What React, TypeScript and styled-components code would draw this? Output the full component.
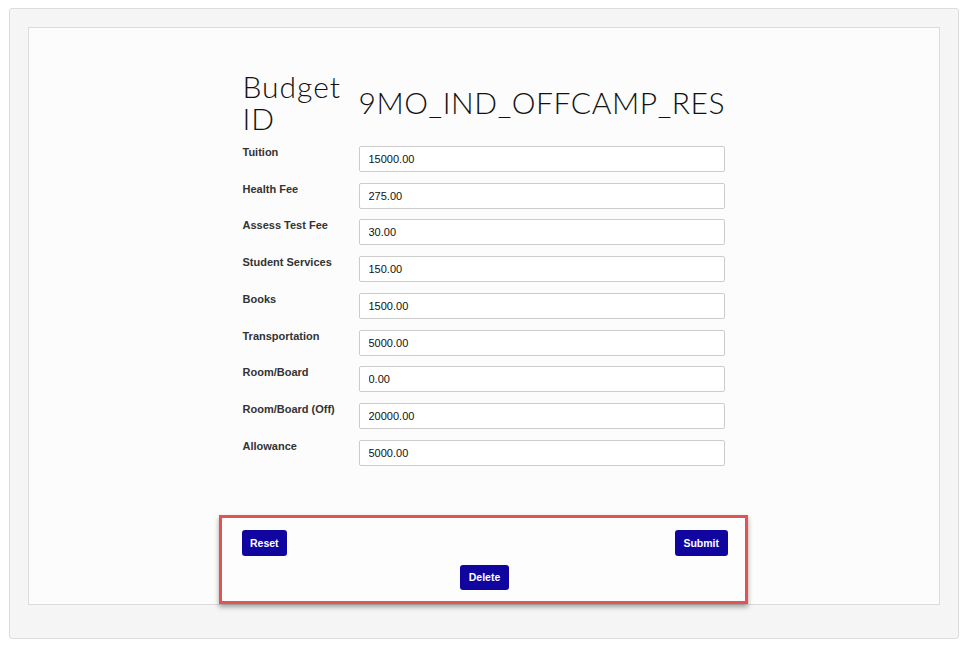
import React from "react";
import styled, { createGlobalStyle } from "styled-components";

const GlobalStyle = createGlobalStyle`
  html, body {
    margin: 0;
    padding: 0;
    background: #ffffff;
  }
  body {
    padding: 8px 7px 7px 9px;
    font-family: "Liberation Sans", Arial, sans-serif;
  }
`;

const Outer = styled.div`
  width: 950px;
  box-sizing: border-box;
  background: #f5f5f5;
  border: 1px solid #dcdcdc;
  border-radius: 3px;
  padding: 18px 18px 33px 18px;
`;

const Inner = styled.div`
  background: #fcfcfc;
  border: 1px solid #dcdcdc;
  display: flex;
  justify-content: center;
  padding: 42px 2px 0 0;
  height: 578px;
  box-sizing: border-box;
`;

const Form = styled.form`
  width: 529px;
  display: flex;
  flex-direction: column;
`;

const Fields = styled.div`
  display: grid;
  grid-template-columns: 116px 366px;
  column-gap: 0;
  row-gap: 10.75px;
  padding: 0 22px 0 24px;
  margin-bottom: 49px;
`;

const Heading = styled.h1`
  margin: 0 0 1px 0;
  font-family: Lato, "Open Sans", sans-serif;
  font-weight: 300;
  font-size: 30px;
  line-height: 32px;
  color: #111;
  letter-spacing: 1px;
`;

const HeadingValue = styled.div`
  font-family: Lato, "Open Sans", sans-serif;
  font-weight: 300;
  font-size: 30px;
  line-height: 32px;
  color: #111;
  align-self: center;
  margin-bottom: 1px;
  white-space: nowrap;
  letter-spacing: 0.57px;
`;

const Label = styled.label`
  font-family: "Liberation Sans", Arial, sans-serif;
  font-weight: bold;
  font-size: 11px;
  line-height: 12px;
  color: #333;
`;

const Input = styled.input`
  box-sizing: border-box;
  width: 366px;
  height: 26px;
  border: 1px solid #cccccc;
  border-radius: 2px;
  background: #fff;
  padding: 0 9px;
  font-family: "Liberation Sans", Arial, sans-serif;
  font-size: 11px;
  color: #111;
  outline: none;
`;

const ButtonArea = styled.div`
  box-sizing: border-box;
  width: 529px;
  height: 89px;
  border: 3px solid #e05452;
  box-shadow: 0 3px 5px rgba(0, 0, 0, 0.35);
  background: #fdfdfd;
  padding: 12px 17px 0 20px;
  display: flex;
  flex-direction: column;
  gap: 9px;
`;

const ButtonRow = styled.div<{ $align: "between" | "center" }>`
  display: flex;
  justify-content: ${(p) => (p.$align === "between" ? "space-between" : "center")};
`;

const Button = styled.button<{ $h?: number }>`
  height: ${(p) => p.$h ?? 26}px;
  padding: 0 8.5px;
  background: #10069f;
  color: #fff;
  border: none;
  border-radius: 3px;
  font-family: "Liberation Sans", Arial, sans-serif;
  font-weight: bold;
  font-size: 10.5px;
  cursor: pointer;
`;

const rows: [string, string][] = [
  ["Tuition", "15000.00"],
  ["Health Fee", "275.00"],
  ["Assess Test Fee", "30.00"],
  ["Student Services", "150.00"],
  ["Books", "1500.00"],
  ["Transportation", "5000.00"],
  ["Room/Board", "0.00"],
  ["Room/Board (Off)", "20000.00"],
  ["Allowance", "5000.00"],
];

export default function App() {
  return (
    <>
      <GlobalStyle />
      <Outer>
        <Inner>
          <Form onSubmit={(e) => e.preventDefault()}>
            <Fields>
              <Heading>Budget ID</Heading>
              <HeadingValue>9MO_IND_OFFCAMP_RES</HeadingValue>
              {rows.map(([label, value]) => (
                <React.Fragment key={label}>
                  <Label>{label}</Label>
                  <Input defaultValue={value} />
                </React.Fragment>
              ))}
            </Fields>
            <ButtonArea>
              <ButtonRow $align="between">
                <Button type="button">Reset</Button>
                <Button type="submit">Submit</Button>
              </ButtonRow>
              <ButtonRow $align="center">
                <Button type="button" $h={25}>Delete</Button>
              </ButtonRow>
            </ButtonArea>
          </Form>
        </Inner>
      </Outer>
    </>
  );
}
